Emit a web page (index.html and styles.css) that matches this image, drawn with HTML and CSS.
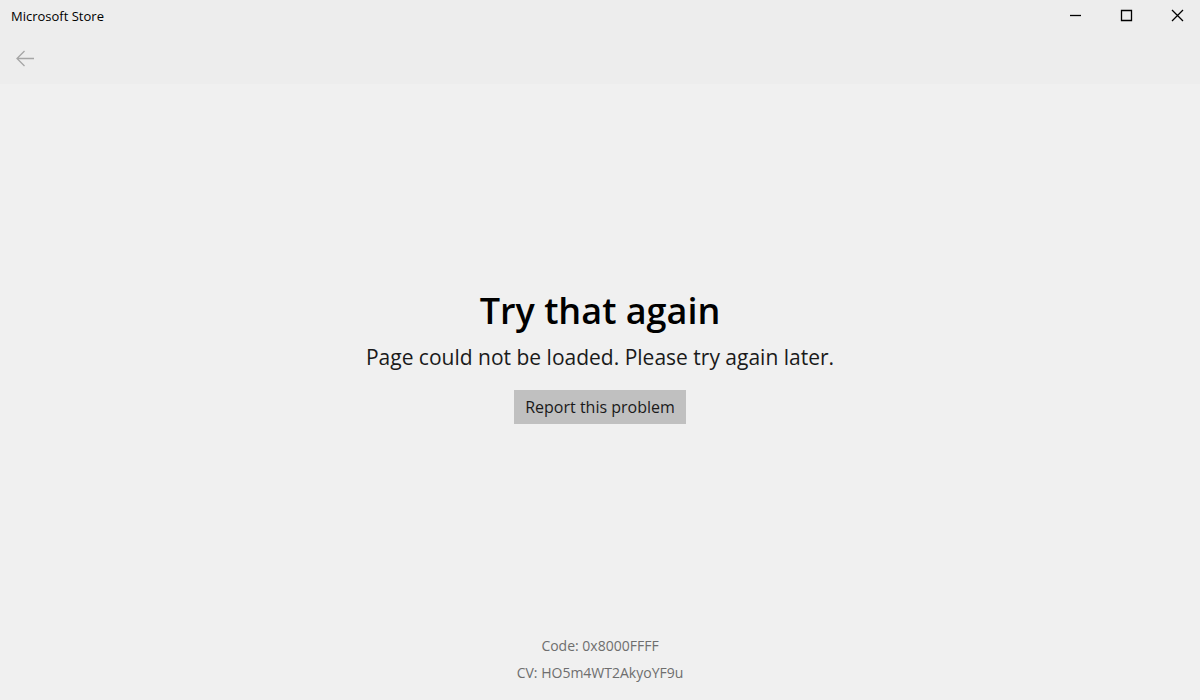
FILE: index.html
```html
<!DOCTYPE html>
<html lang="en">
<head>
<meta charset="utf-8">
<title>Microsoft Store</title>
<link rel="stylesheet" href="styles.css">
</head>
<body>

<!-- Title bar -->
<header class="top">
    <div class="titlebar">
        <span class="app-name">Microsoft Store</span>
        <div class="window-buttons">
            <button type="button" aria-label="Minimize">
                <svg width="13" height="13" viewBox="0 0 13 13"><path d="M1 6.5h11"/></svg>
            </button>
            <button type="button" aria-label="Maximize">
                <svg width="13" height="13" viewBox="0 0 13 13"><path d="M1.5 1.5h10v10h-10z"/></svg>
            </button>
            <button type="button" aria-label="Close">
                <svg width="13" height="13" viewBox="0 0 13 13"><path d="M1 1l11 11M12 1L1 12"/></svg>
            </button>
        </div>
    </div>
    <button type="button" class="back" aria-label="Back" disabled>
        <svg width="18" height="17" viewBox="0 0 18 17"><path d="M18 8.5H1M8.500 1L1 8.500l7.500 7.500"/></svg>
    </button>
</header>

<!-- Error message -->
<main class="message">
    <h1>Try that again</h1>
    <p>Page could not be loaded. Please try again later.</p>
    <button type="button" class="report">Report this problem</button>
</main>

<!-- Error details -->
<footer class="details">
    <p>Code: 0x8000FFFF</p>
    <p>CV: HO5m4WT2AkyoYF9u</p>
</footer>

</body>
</html>
```
FILE: styles.css
```css
* {
  box-sizing: border-box;
}

body {
  margin: 0;
  min-height: 100vh;
  display: flex;
  flex-direction: column;
  background-color: #f0f0f0;
  color: #000;
  font-family: "Segoe UI", "Open Sans", "Noto Sans", sans-serif;
}

h1, p {
  margin: 0;
}

button {
  border: none;
  padding: 0;
  background: none;
  font-family: inherit;
  color: inherit;
}

svg {
  display: block;
  fill: none;
  stroke: currentColor;
  stroke-width: 1.3;
}

/* Title bar */
.top {
  height: 84px;
  background-color: #ededed;
}

.titlebar {
  display: flex;
  justify-content: space-between;
  height: 32px;
}

.app-name {
  padding-left: 11px;
  font-size: 13px;
  line-height: 32px;
}

.window-buttons {
  display: flex;
  gap: 6px;
}

.window-buttons button {
  display: flex;
  align-items: center;
  justify-content: center;
  width: 45px;
  height: 31px;
}

.back {
  display: flex;
  align-items: center;
  justify-content: center;
  width: 50px;
  height: 53px;
  color: #a6a6a6;
}

/* Error message */
.message {
  flex: 1;
  display: flex;
  flex-direction: column;
  align-items: center;
  justify-content: center;
  padding-bottom: 6px;
  text-align: center;
}

.message h1 {
  font-size: 36px;
  font-weight: 600;
  line-height: 48px;
}

.message p {
  color: #1a1a1a;
  font-size: 21px;
  line-height: 44px;
}

.report {
  height: 34px;
  margin-top: 11px;
  padding: 0 11px;
  background-color: #c0c0c0;
  color: #1a1a1a;
  font-size: 16px;
}

/* Error details */
.details {
  padding-bottom: 14px;
  color: #6e6e6e;
  font-size: 14px;
  line-height: 27px;
  text-align: center;
}
```
